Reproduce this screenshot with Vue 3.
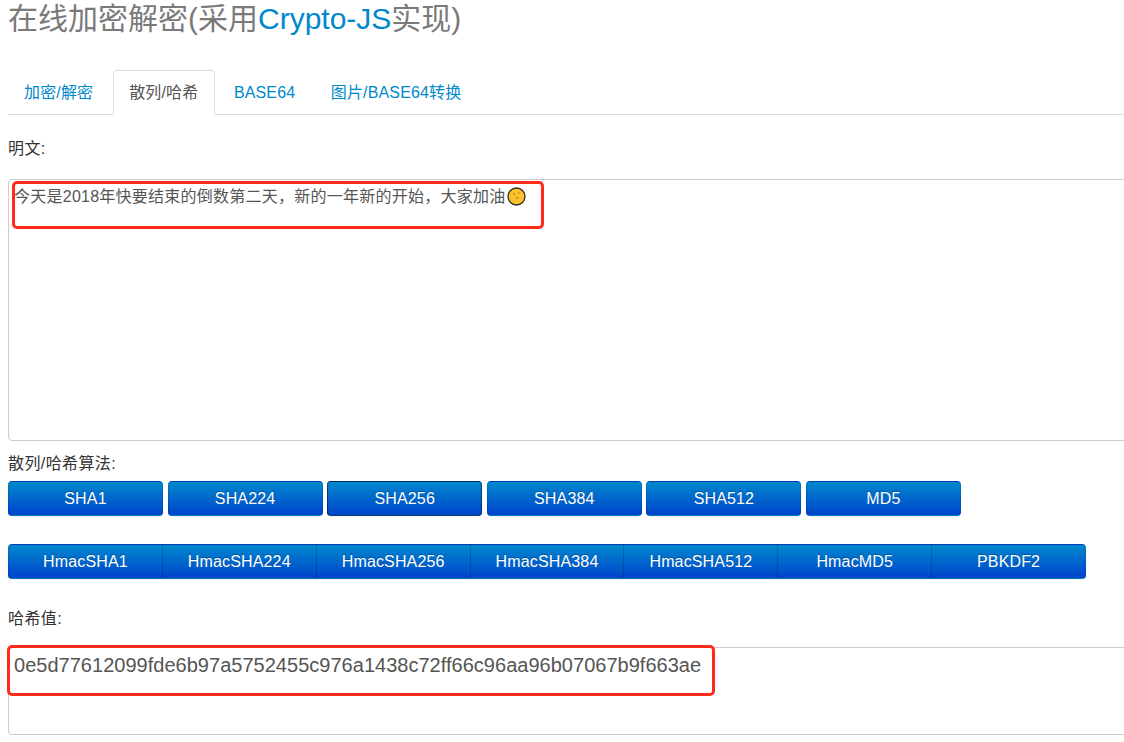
<script setup>
const tabs = ['加密/解密', '散列/哈希', 'BASE64', '图片/BASE64转换']
const hashes = ['SHA1', 'SHA224', 'SHA256', 'SHA384', 'SHA512', 'MD5']
const hmacs = ['HmacSHA1', 'HmacSHA224', 'HmacSHA256', 'HmacSHA384', 'HmacSHA512', 'HmacMD5', 'PBKDF2']
</script>

<template>
  <div class="page">
    <h1 class="title">在线加密解密(采用<a class="link">Crypto-JS</a>实现)</h1>

    <ul class="tabs">
      <li v-for="tab in tabs" :key="tab" class="tab" :class="{ active: tab === '散列/哈希' }">{{ tab }}</li>
    </ul>

    <p class="label first">明文:</p>
    <div class="box plain">
      <span class="mark plainMark"></span>
      今天是2018年快要结束的倒数第二天，新的一年新的开始，大家加油<svg class="emoji" width="19" height="19" viewBox="0 0 19 19">
        <circle cx="9.5" cy="9.5" r="8.5" fill="#fbc12e" stroke="#2f2c20" stroke-width="1.3" />
        <circle cx="7" cy="7" r="1.2" fill="#e09a1c" />
        <circle cx="12" cy="6" r="1" fill="#e09a1c" />
        <circle cx="10" cy="11" r="1.4" fill="#e09a1c" />
      </svg>
    </div>

    <p class="label algo">散列/哈希算法:</p>
    <div class="btnRow">
      <button v-for="h in hashes" :key="h" class="btn" :class="{ focused: h === 'SHA256' }">{{ h }}</button>
    </div>
    <div class="btnGroup">
      <button v-for="h in hmacs" :key="h" class="btn grouped">{{ h }}</button>
    </div>

    <p class="label result">哈希值:</p>
    <div class="box hash">
      <span class="mark hashMark"></span>
      0e5d77612099fde6b97a5752455c976a1438c72ff66c96aa96b07067b9f663ae
    </div>
  </div>
</template>

<style>
  html, body {
    overflow: hidden;
    background: #fff;
  }
</style>

<style scoped>
  .page {
    width: 1124px;
    height: 742px;
    overflow: hidden;
    padding-left: 8px;
    box-sizing: border-box;
    font-family: "Liberation Sans", "Noto Sans CJK SC", sans-serif;
    font-size: 16px;
    color: #333;
  }

  .title {
    margin: 0;
    height: 70px;
    font-size: 30px;
    font-weight: 400;
    line-height: 37px;
    color: #7a7a7a;
  }

  .link {
    color: #0088cc;
  }

  .tabs {
    display: flex;
    margin: 0;
    padding: 0;
    height: 45px;
    list-style: none;
    border-bottom: 1px solid #ddd;
    box-sizing: border-box;
    width: 1200px;
  }

  .tab {
    height: 45px;
    box-sizing: border-box;
    padding: 0 15px;
    margin-right: 3.5px;
    border: 1px solid transparent;
    border-radius: 4px 4px 0 0;
    line-height: 43px;
    letter-spacing: 0.15px;
    color: #0088cc;
  }

  .tab.active {
    padding: 0 15.5px;
    margin-right: 3px;
    color: #555;
    background: #fff;
    border-color: #ddd #ddd #fff;
  }

  .label {
    margin: 0;
    line-height: 20px;
    letter-spacing: 0.4px;
  }

  .label.first {
    margin-top: 24px;
  }

  .label.algo {
    margin-top: 13px;
  }

  .label.result {
    margin-top: 30px;
  }

  .box {
    position: relative;
    box-sizing: border-box;
    width: 1200px;
    border: 1px solid #ccc;
    border-radius: 4px;
    padding: 5px;
    color: #555;
  }

  .plain {
    height: 262px;
    margin-top: 20px;
    padding-top: 6px;
    line-height: 21px;
    letter-spacing: 0.25px;
  }

  .hash {
    height: 88px;
    margin-top: 18px;
    padding-top: 2px;
    font-size: 20px;
    line-height: 30px;
    letter-spacing: 0.02px;
  }

  .emoji {
    vertical-align: -4px;
    margin-left: 1px;
  }

  .mark {
    position: absolute;
    box-sizing: border-box;
    border: 3px solid #ff2a1a;
    border-radius: 5px;
  }

  .plainMark {
    left: 3px;
    top: 1px;
    width: 532px;
    height: 48px;
  }

  .hashMark {
    left: -2px;
    top: -3px;
    width: 708px;
    height: 51px;
  }

  .btnRow {
    display: flex;
    gap: 4.6px;
    margin-top: 7px;
  }

  .btnGroup {
    display: flex;
    width: 1078px;
    margin-top: 28px;
  }

  .btn {
    width: 155px;
    height: 35px;
    padding: 0;
    font-family: inherit;
    font-size: 16px;
    letter-spacing: 0.15px;
    color: #fff;
    text-shadow: 0 -1px 0 rgba(0, 0, 0, 0.25);
    background: linear-gradient(to bottom, #0088cc, #0044cc);
    border: 1px solid rgba(0, 0, 0, 0.1);
    border-radius: 4px;
    box-shadow: 0 1px 2px rgba(0, 0, 0, 0.05);
  }

  .btn.focused {
    outline: 1px dotted #0b1420;
    outline-offset: -1px;
  }

  .btn.grouped {
    flex: 1;
    width: auto;
    border-radius: 0;
    border-left-color: rgba(0, 0, 0, 0.18);
    border-right: none;
  }

  .btn.grouped:first-child {
    border-radius: 4px 0 0 4px;
    border-left-color: rgba(0, 0, 0, 0.1);
  }

  .btn.grouped:last-child {
    border-radius: 0 4px 4px 0;
    border-right: 1px solid rgba(0, 0, 0, 0.1);
  }
</style>
